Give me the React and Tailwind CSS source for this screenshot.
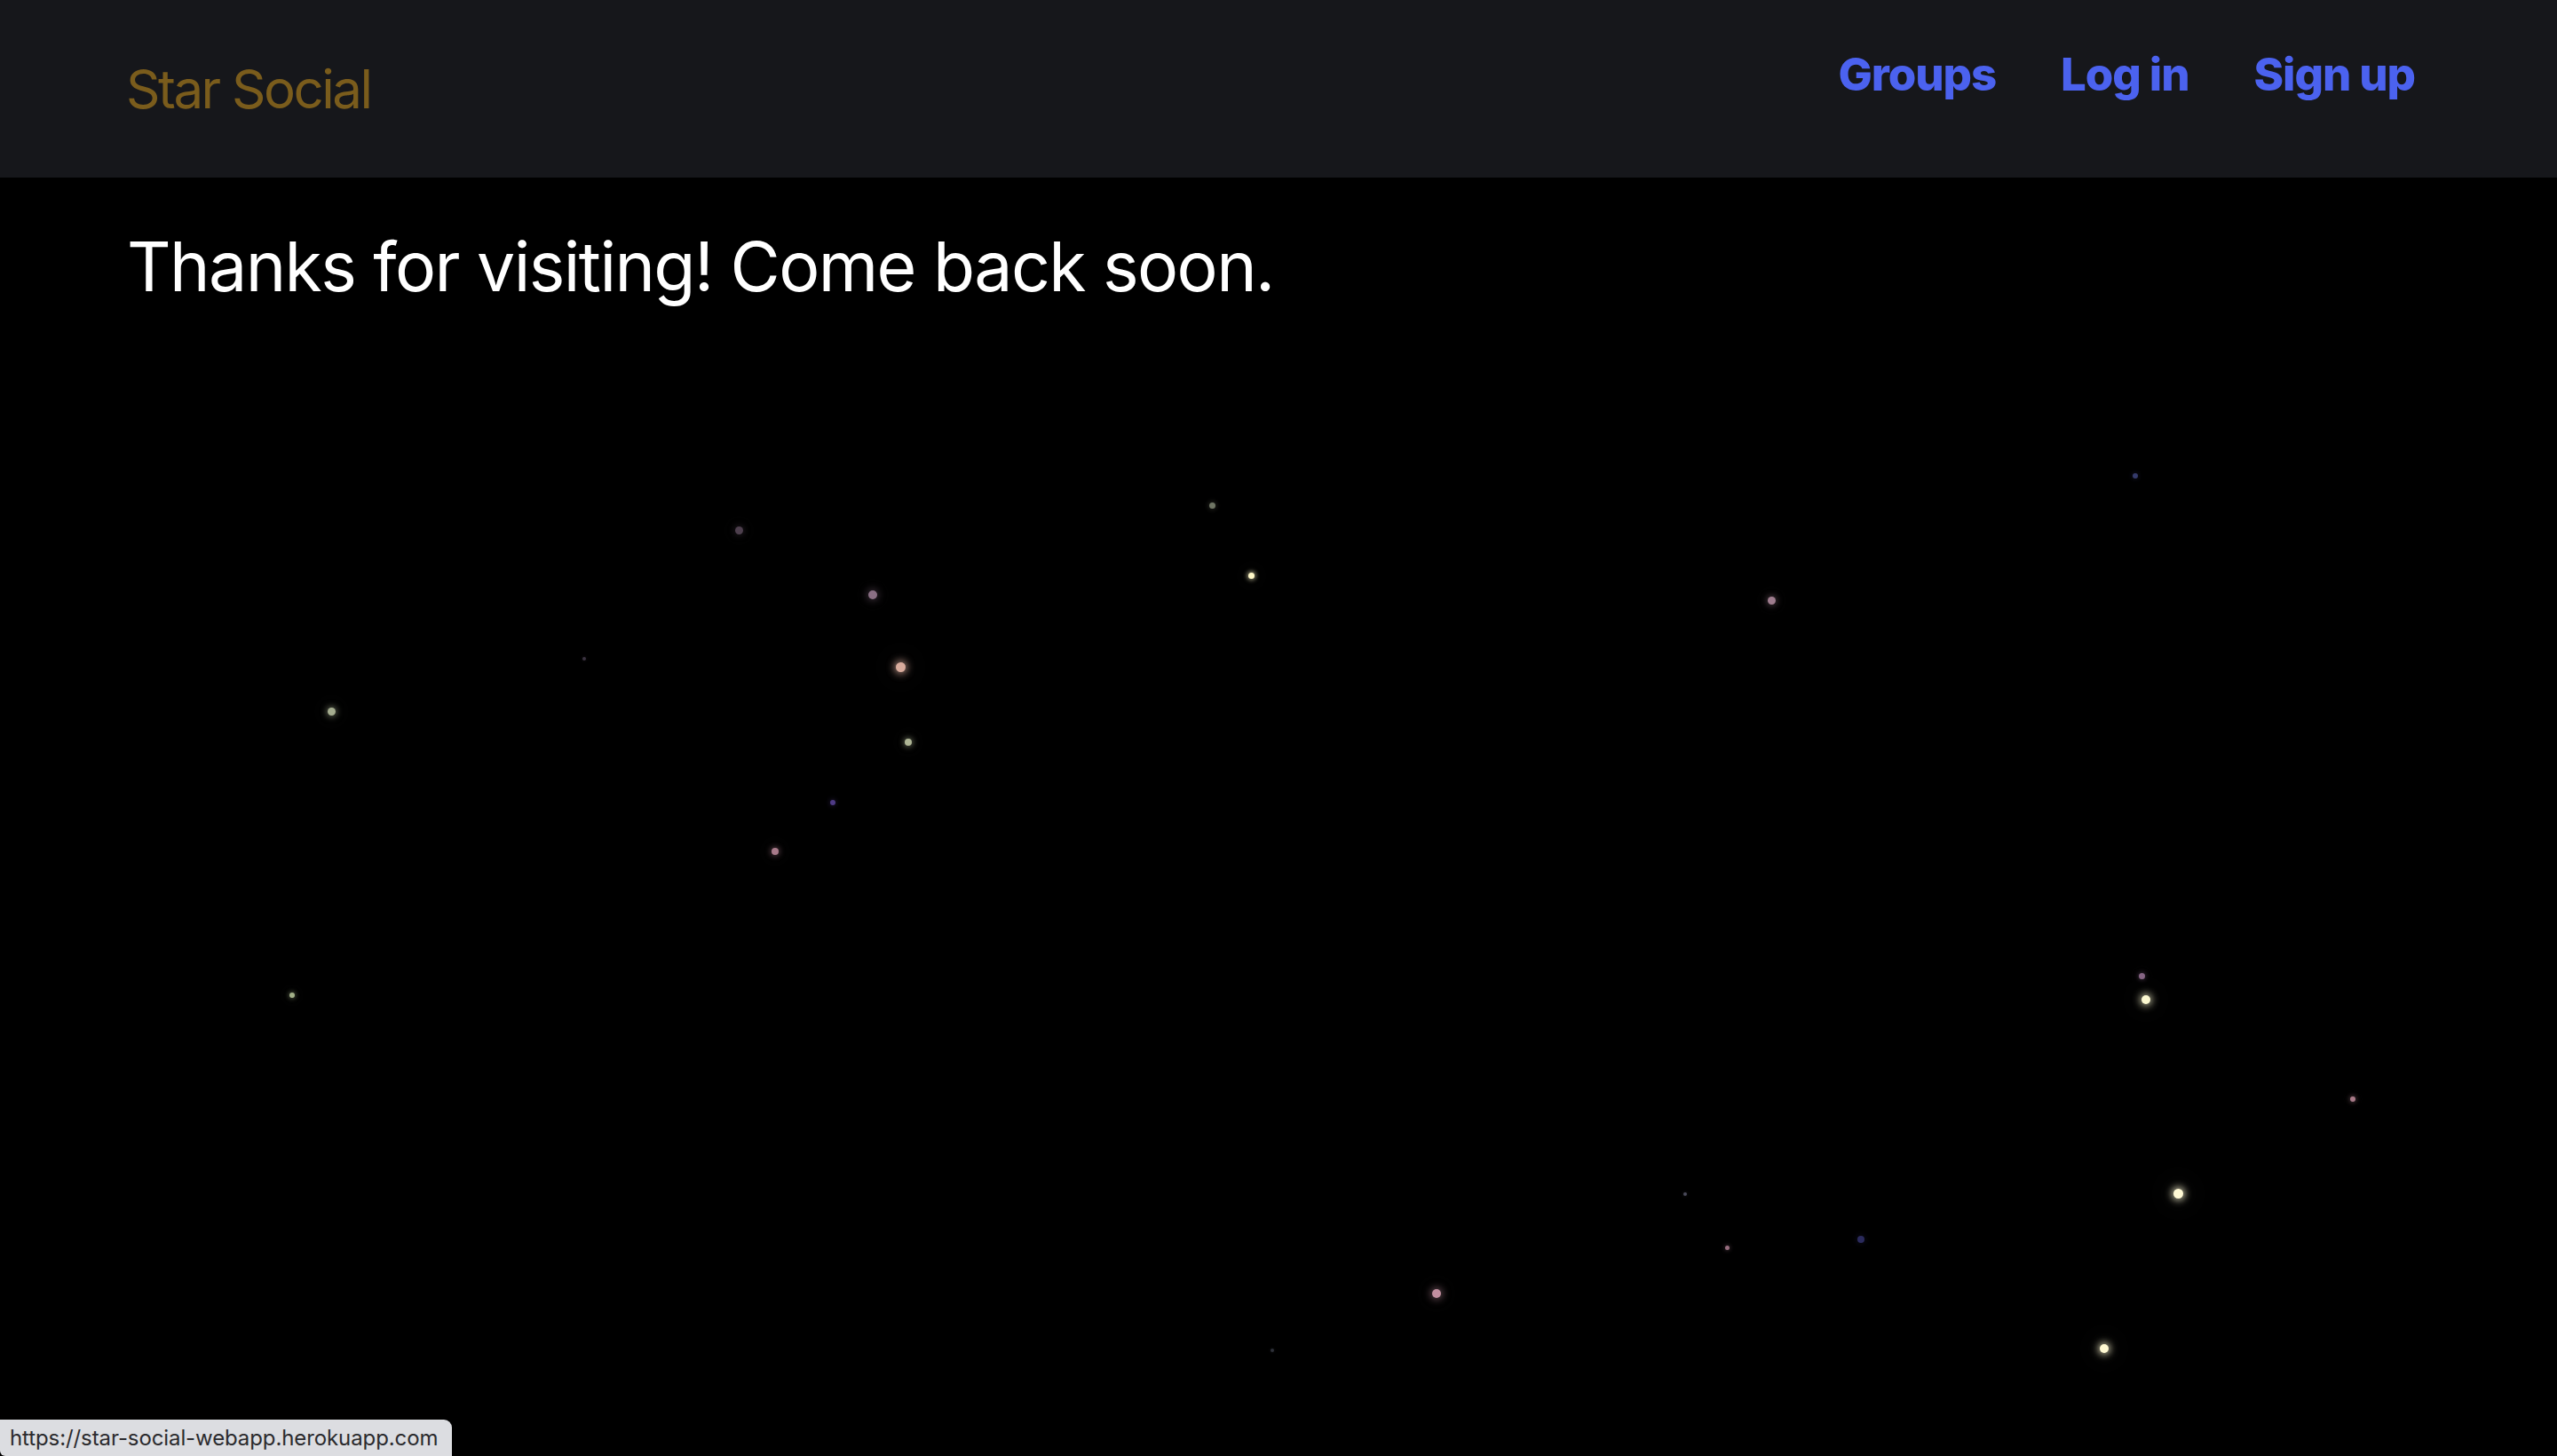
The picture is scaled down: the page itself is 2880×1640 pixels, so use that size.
import React from "react";

const stars = [
  { x: 832, y: 597, s: 9, c: "#4d3f4d", g: 0.35 },
  { x: 1365, y: 569, s: 7, c: "#6f7564", g: 0.3 },
  { x: 1409, y: 648, s: 7, c: "#fff8c8", g: 0.6 },
  { x: 983, y: 670, s: 10, c: "#8a6f84", g: 0.4 },
  { x: 658, y: 742, s: 4, c: "#3a3340", g: 0.2 },
  { x: 1014, y: 751, s: 11, c: "#d8ab9c", g: 0.7 },
  { x: 373, y: 801, s: 9, c: "#a5ad8f", g: 0.5 },
  { x: 1023, y: 836, s: 8, c: "#aeb595", g: 0.5 },
  { x: 938, y: 904, s: 6, c: "#4e3a85", g: 0.3 },
  { x: 873, y: 959, s: 8, c: "#a87a8a", g: 0.45 },
  { x: 1995, y: 676, s: 9, c: "#9e7c8e", g: 0.4 },
  { x: 2405, y: 536, s: 6, c: "#343a6b", g: 0.25 },
  { x: 329, y: 1121, s: 6, c: "#a2b088", g: 0.45 },
  { x: 2412, y: 1099, s: 7, c: "#856483", g: 0.35 },
  { x: 2417, y: 1126, s: 10, c: "#fbf8d0", g: 0.7 },
  { x: 2650, y: 1238, s: 6, c: "#a87a88", g: 0.4 },
  { x: 2453, y: 1344, s: 11, c: "#fff9d5", g: 0.75 },
  { x: 1898, y: 1345, s: 4, c: "#4a4a5a", g: 0.2 },
  { x: 1945, y: 1405, s: 5, c: "#966c7e", g: 0.3 },
  { x: 2096, y: 1396, s: 8, c: "#2a2a5c", g: 0.25 },
  { x: 1618, y: 1457, s: 10, c: "#c28fa0", g: 0.5 },
  { x: 1433, y: 1521, s: 4, c: "#2e3038", g: 0.2 },
  { x: 2370, y: 1519, s: 10, c: "#fff9d2", g: 0.75 },
];

function Star({ x, y, s, c, g }) {
  const a = Math.round(g * 255)
    .toString(16)
    .padStart(2, "0");
  return (
    <div
      className="absolute rounded-full"
      style={{
        left: x - s / 2,
        top: y - s / 2,
        width: s,
        height: s,
        background: c,
        boxShadow: `0 0 ${s * 0.8}px ${s * 0.2}px ${c}${a}, 0 0 ${s * 3}px ${s}px rgba(255,255,255,${g * 0.04})`,
      }}
    />
  );
}

export default function App() {
  return (
    <div className="relative h-screen w-full overflow-hidden bg-black">
      <div className="absolute inset-0">
        {stars.map((st, i) => (
          <Star key={i} {...st} />
        ))}
      </div>

      <div className="relative">
        <header className="flex h-[200px] items-start justify-between bg-[#16171b] pl-[142px] pr-[160px] font-['Inter',sans-serif]">
          <a className="pt-[70px] text-[60px] leading-none tracking-[-2.5px] text-[#7a5c1c]">
            Star Social
          </a>
          <nav className="flex gap-[73px] pt-[58px] text-[51px] font-extrabold leading-none tracking-[-1.1px] text-[#4b62ef]">
            <a>Groups</a>
            <a>Log in</a>
            <a>Sign up</a>
          </nav>
        </header>

        <main className="pl-[143px] pt-[62px] font-['Inter',sans-serif]">
          <h1 className="text-[77px] font-normal leading-none tracking-[-1.6px] text-white">
            Thanks for visiting! Come back soon.
          </h1>
        </main>
      </div>

      <div className="absolute bottom-0 left-0 flex h-[41px] w-[509px] items-center rounded-tr-[9px] rounded-bl-[6px] bg-[#dcdde1] pl-[11px] font-['Inter',sans-serif] text-[24px] tracking-[-0.1px] text-[#2b2b2e]">
        https://star-social-webapp.herokuapp.com
      </div>
    </div>
  );
}
